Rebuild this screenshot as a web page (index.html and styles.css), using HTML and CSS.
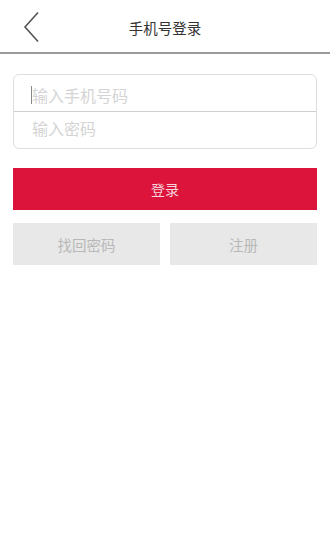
FILE: index.html
```html
<!DOCTYPE html>
<html lang="zh">
<head>
<meta charset="utf-8">
<link rel="stylesheet" href="styles.css">
</head>
<body>
<header class="topbar">
  <a class="back" aria-label="返回">
    <svg width="18" height="32" viewBox="0 0 18 32"><path d="M15 1.5 L2 16 L15 30.5" fill="none" stroke="#555" stroke-width="1.6"/></svg>
  </a>
  <h1 class="title">手机号登录</h1>
</header>
<main class="content">
  <div class="fields">
    <div class="field field-phone"><span class="cursor"></span><span class="ph">输入手机号码</span></div>
    <div class="field field-pass"><span class="ph">输入密码</span></div>
  </div>
  <button class="login">登录</button>
  <div class="actions">
    <button class="sub">找回密码</button>
    <button class="sub">注册</button>
  </div>
</main>
</body>
</html>
```
FILE: styles.css
```css
html, body {
  margin: 0;
  padding: 0;
  background: #fff;
  font-family: "Noto Sans CJK SC", "Noto Sans", sans-serif;
}
.topbar {
  height: 52px;
  border-bottom: 2px solid #9a9a9a;
  display: flex;
  align-items: center;
  justify-content: center;
  position: relative;
}
.back {
  position: absolute;
  left: 23px;
  top: 11px;
  display: block;
  line-height: 0;
}
.title {
  margin: 0;
  font-size: 14.5px;
  font-weight: normal;
  color: #333;
  padding-top: 2px;
}
.content {
  padding: 20px 13px 0;
}
.fields {
  border: 1px solid #dedede;
  border-radius: 6px;
  display: flex;
  flex-direction: column;
}
.field {
  height: 36px;
  box-sizing: border-box;
  display: flex;
  align-items: center;
  padding-left: 18px;
  position: relative;
}
.field-phone {
  padding-top: 4px;
}
.field-pass {
  height: 37px;
  border-top: 1px solid #cfcfcf;
  padding-bottom: 4px;
}
.cursor {
  position: absolute;
  left: 17px;
  top: 11px;
  width: 1px;
  height: 18px;
  background: #888;
}
.ph {
  font-size: 16px;
  color: #d4d4d4;
}
.login {
  display: block;
  width: 100%;
  height: 42px;
  margin-top: 19px;
  border: 0;
  background: #dc143c;
  color: #f6d6dc;
  font-family: inherit;
  font-size: 14px;
  padding: 0;
}
.actions {
  display: flex;
  gap: 10px;
  margin-top: 13px;
}
.sub {
  flex: 1;
  height: 42px;
  border: 0;
  background: #e8e8e8;
  color: #b8b8b8;
  font-family: inherit;
  font-size: 14.5px;
  padding: 0;
}
```
